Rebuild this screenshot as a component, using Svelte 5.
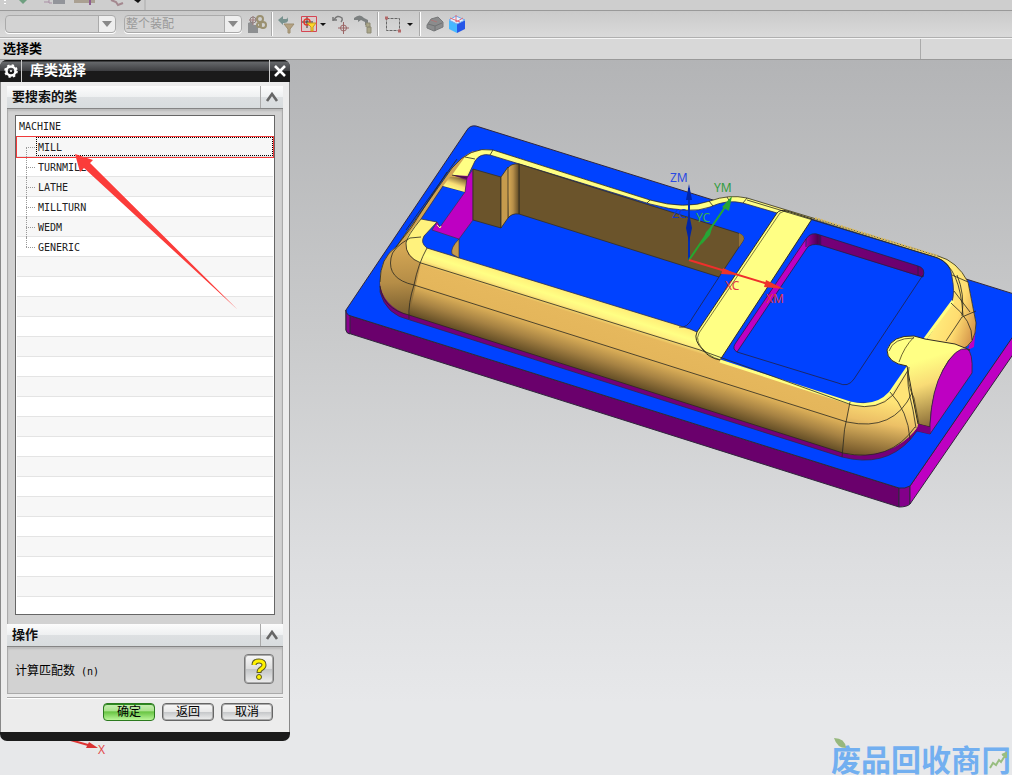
<script lang="ts">
    const classes = ["MACHINE", "MILL", "TURNMILL", "LATHE", "MILLTURN", "WEDM", "GENERIC"];
    const rows = [...classes, ...Array(18).fill("")];
    let selected = $state("MILL");
    let showClasses = $state(true);
    let showActions = $state(true);
</script>

{#snippet chevron(open: boolean)}
    <svg width="14" height="12" viewBox="0 0 14 12" fill="none" stroke="#666" stroke-width="2.6">
        <path d={open ? "M2 10L7 3L12 10" : "M2 3L7 10L12 3"} />
    </svg>
{/snippet}

<div class="app">
    <!-- lower edge of the main toolbar -->
    <div class="strip">
        <svg width="146" height="10" viewBox="0 0 146 10">
            <path d="M5 0v1M5 3v1" stroke="#fff" stroke-width="2" />
            <path d="M19 0h8l-4 4z" fill="#6f9f80" />
            <path d="M44 2h5M49 0v3h3" stroke="#a98fa5" fill="none" />
            <path d="M53 0h12v4H53z" fill="#92949a" />
            <path d="M74 0h21v3H74z" fill="#aaa092" /><path d="M90 0v5" stroke="#8f5e91" stroke-width="2" />
            <path d="M111 0l5 2 2 3 5-2" stroke="#a4888f" stroke-width="2" fill="none" />
            <path d="M134 0h7l-3 3z" fill="#111" />
            <path d="M145 0v10" stroke="#aaa" />
        </svg>
    </div>

    <div class="toolbar">
        <select class="combo first" aria-label="类型过滤器" disabled><option></option></select>
        <select class="combo second" aria-label="选择范围" disabled><option>整个装配</option></select>
        <button class="tool lead" aria-label="装配约束">
            <svg viewBox="0 0 22 22">
                <path d="M2 10l5-2v4h5v8H2z" fill="#8d8f91" /><path d="M3 7h8M7 3v9" stroke="#a07878" />
                <circle cx="7" cy="7" r="3" fill="none" stroke="#8f8080" />
                <g fill="none" stroke="#9a9070" stroke-width="2"><circle cx="14" cy="6" r="3" /><circle cx="17" cy="12" r="3" /><circle cx="13" cy="12" r="2" /></g>
            </svg>
        </button>
        <i class="sep"></i>
        <button class="tool" aria-label="重置过滤器">
            <svg viewBox="0 0 22 22">
                <path d="M2 7l5-4v3h3q2 0 2-3v5q-1 2-4 2H7v2z" fill="#78928f" />
                <path d="M8 11h10l-4 5v4h-2v-4z" fill="#b4a282" stroke="#9d8e70" />
            </svg>
        </button>
        <button class="tool" aria-label="选择优先级">
            <svg viewBox="0 0 22 22">
                <path d="M3.500 3.500h15v15h-15z" fill="#dbcccc" stroke="#d54553" />
                <path d="M4 9h11M9 4v11" stroke="#333" /><circle cx="9" cy="9" r="3" fill="none" stroke="#e13b30" stroke-width="1.500" />
                <path d="M9 10h9l-3 4v4h-2v-4z" fill="#ffd72a" stroke="#c49b20" />
            </svg>
        </button>
        <span class="caret"></span>
        <button class="tool" aria-label="旋转点">
            <svg viewBox="0 0 22 22" fill="none">
                <path d="M3 8V4M3 7h4M4 7q3-6 8-2q1 2-1 4" stroke="#777" stroke-width="1.500" />
                <path d="M8 15h11M13.500 9v12" stroke="#9b6666" /><circle cx="13.500" cy="15" r="3" stroke="#9b6666" />
            </svg>
        </button>
        <button class="tool" aria-label="移动对象">
            <svg viewBox="0 0 22 22">
                <path d="M2 5q6-5 10 0l4 2v5h-3V9L9 7 6 9V7H2z" fill="#7c8080" />
                <path d="M14 10h4v4h-4zM16 14h3v6h-4v-5z" fill="#aaa689" stroke="#8e8b76" />
            </svg>
        </button>
        <i class="sep"></i>
        <button class="tool" aria-label="矩形选择">
            <svg viewBox="0 0 22 22" fill="none">
                <path d="M4.500 5.500h13v12h-13z" stroke="#666" stroke-dasharray="3 1" />
                <path d="M3 5h3M16 18h3" stroke="#b36868" stroke-width="3" />
            </svg>
        </button>
        <span class="caret wide"></span>
        <i class="sep"></i>
        <button class="tool" aria-label="着色">
            <svg viewBox="0 0 22 22">
                <path d="M3 12l4-6 7-2 5 5v5l-9 4-7-3z" fill="#8b8c8d" stroke="#77797a" />
                <path d="M4 11l7 2 7-3M11 13v5" stroke="#717374" fill="none" /><path d="M7 7l6 2" stroke="#a77" />
            </svg>
        </button>
        <button class="tool" aria-label="定向视图">
            <svg viewBox="0 0 22 22">
                <path d="M3 7l8 4v9l-8-4z" fill="#46b8ff" /><path d="M11 11l8-4v9l-8 4z" fill="#2557e8" />
                <path d="M3 7l7-4 9 4-8 4z" fill="#e5f4ff" stroke="#6da6f0" />
                <path d="M10 2v7M10 9l7-4M4 5l10 4" stroke="#e46a75" />
            </svg>
        </button>
    </div>

    <div class="cue"><span class="prompt">选择类</span><span class="status"></span></div>

    <main class="viewport">
        <svg class="scene" viewBox="0 60 1012 715" preserveAspectRatio="xMinYMin slice">
            <defs>
                <linearGradient id="front" gradientUnits="userSpaceOnUse" x1="560" y1="289" x2="539" y2="355">
                    <stop offset="0" stop-color="#ffee78" /><stop offset=".12" stop-color="#ffff84" />
                    <stop offset=".2" stop-color="#fff080" /><stop offset=".28" stop-color="#e6b85d" />
                    <stop offset=".56" stop-color="#e4b65b" /><stop offset=".8" stop-color="#a68243" />
                    <stop offset="1" stop-color="#685128" />
                </linearGradient>
                <linearGradient id="left" gradientUnits="userSpaceOnUse" x1="397" y1="250" x2="400" y2="315">
                    <stop offset="0" stop-color="#d2a553" /><stop offset=".5" stop-color="#b58d47" /><stop offset="1" stop-color="#775d2f" />
                </linearGradient>
                <linearGradient id="bend" gradientUnits="userSpaceOnUse" x1="882" y1="400" x2="872" y2="456">
                    <stop offset="0" stop-color="#ffe477" /><stop offset=".4" stop-color="#ecc066" /><stop offset="1" stop-color="#76592b" />
                </linearGradient>
                <linearGradient id="knob" gradientUnits="userSpaceOnUse" x1="915" y1="362" x2="936" y2="428">
                    <stop offset="0" stop-color="#ffff84" /><stop offset=".35" stop-color="#f9dc76" /><stop offset="1" stop-color="#806332" />
                </linearGradient>
                <linearGradient id="corner" gradientUnits="userSpaceOnUse" x1="940" y1="310" x2="976" y2="322">
                    <stop offset="0" stop-color="#ffeb7b" /><stop offset=".5" stop-color="#ffdc70" /><stop offset="1" stop-color="#d89b4e" />
                </linearGradient>
                <linearGradient id="groove" gradientUnits="userSpaceOnUse" x1="458" y1="176" x2="453" y2="190">
                    <stop offset="0" stop-color="#71572c" /><stop offset=".6" stop-color="#f9dd75" /><stop offset="1" stop-color="#ffff84" />
                </linearGradient>
                <linearGradient id="round">
                    <stop offset="0" stop-color="#dfb058" /><stop offset=".5" stop-color="#b88f49" /><stop offset="1" stop-color="#604a25" />
                </linearGradient>
                <linearGradient id="wall">
                    <stop offset="0" stop-color="#a000a5" /><stop offset=".1" stop-color="#4c0050" /><stop offset=".14" stop-color="#760078" /><stop offset="1" stop-color="#6a006c" />
                </linearGradient>
            </defs>

            <!-- base plate -->
            <g stroke="#30283c" stroke-width="1">
                <path d="M346 310V330Q346 333 351 334L899 507V488L351 316Z" fill="#6a006c" />
                <path d="M346 310V330Q346 333 350 334V316Z" fill="#8b008f" />
                <path d="M899 488V507Q907 507 910 504V486Z" fill="#83008a" />
                <path d="M910 486V504L1014 353V334Z" fill="#be00c2" />
                <path d="M346 310L467 130Q470 125 476 126L1014 294V335L910 486Q905 489 899 488L351 316Q346 315 346 310Z" fill="#0042ff" />
            </g>

            <!-- body -->
            <path d="M380 282V292Q386 315 410 320L842 457Q884 468 910 440L917 431L930 434V425L915 420L860 449L409 309Z" fill="#74007a" stroke="#30283c" stroke-width=".7" />
            <path d="M972 335L968 350L974 347L976 325Z" fill="#be00c2" />
            <path d="M380 282Q380 258 396 247L452 168Q470 146 493 150L650 200Q685 210 710 201Q729 194 747 198L938 256Q957 261 968 282L976 323Q976 345 960 350L919 425Q900 453 863 455Q854 456 843 453L409 315Q382 306 380 282Z" fill="url(#front)" />
            <path d="M380 282Q380 258 396 247L452 168Q461 157 473 151L478 158L421 219Q405 236 406 244Q409 257 421 263L409 315Q382 306 380 282Z" fill="url(#left)" />
            <path d="M421 219L437 222L424 237Q421 244 427 248L421 263Q407 257 406 243Q406 236 421 219Z" fill="#fff27d" />
            <path d="M452 175L465 157Q474 149 493 150L650 200Q685 210 710 201Q729 194 747 198L784 210L777 213L743 203Q727 199 710 207Q690 215 650 204L490 155Q480 154 475 161L465 177Z" fill="#ffff84" />
            <path d="M747 198L938 256Q957 261 968 282L976 323Q976 345 960 350L925 338L952 300V277Q948 261 938 258L812 220Z" fill="url(#corner)" />
            <path d="M850 402Q876 407 890 392L908 365L919 425Q900 453 863 455Q854 456 843 453Z" fill="url(#bend)" />

            <!-- flat top and floor -->
            <path d="M475 161Q480 153 490 155L650 204Q690 215 710 207Q727 199 743 203L777 213L812 219L935 257Q951 262 952 277Q955 292 952 302L908 366L890 392Q879 405 863 403Q856 404 850 402L720 360L697 332L690 329L427 248Q420 243 424 236L437 222L421 219L443 186L465 192L467 178Z" fill="#0042ff" stroke="#30304a" stroke-width=".8" />
            <path d="M450 177L467 178L465 192L443 186Z" fill="url(#groove)" />
            <path d="M452 175L468 176L467 180Z" fill="#76007b" />
            <path d="M473 169V220L459 239L432 230L437 222L440 227L465 192L467 178Z" fill="#be00c2" stroke="#403047" stroke-width=".7" />
            <path d="M459 239V258L452 254Q450 248 459 239Z" fill="#c69b4d" stroke="#332e22" stroke-width=".6" />
            <path d="M437 225l3 3 1-2" fill="none" stroke="#ffff84" />
            <g stroke="#332e22" stroke-width=".8">
                <path d="M519 164L738 233Q746 236 743 241L719 277L519 214Z" fill="#6b542b" />
                <path d="M473 169L501 177V228L473 220Z" fill="#6b542b" />
                <path d="M507 169Q511 163 519 164V214Q512 213 508 218Z" fill="url(#round)" />
                <path d="M501 177L508 167V218L501 228Z" fill="#c69b4d" />
            </g>
            <path d="M739 233V247L743 241Q746 236 739 233Z" fill="#92723a" />

            <!-- crossbar -->
            <path d="M777 213Q780 209 787 211L812 219L720 360Q709 358 703 350Q693 340 697 332Z" fill="#ffff84" stroke="#333020" />
            <path d="M699 333L780 213Q784 210 788 212M699 333Q694 342 706 352Q713 359 726 361" fill="none" stroke="#48401f" stroke-width=".7" />

            <!-- right pocket -->
            <path d="M806 239Q812 231 820 235L918 266Q926 268 923 277L918 276L820 245Q811 243 807 248Z" fill="url(#wall)" />
            <path d="M806 238L807 248L737 352Q732 349 735 344Z" fill="#be00c2" />
            <path d="M737 352L838 383Q848 388 854 379L923 275M735 344L806 239Q811 231 820 235L918 266Q926 268 923 277L820 245Q811 243 807 248L737 352Q732 349 735 344M918 266V276M820 235V245M806 239V247" fill="none" stroke="#222244" stroke-width=".8" />
            <path d="M719 277L693 317Q687 329 679 327" fill="none" stroke="#222244" stroke-width=".8" />

            <!-- rims and face edges -->
            <path d="M720 361L850 403Q876 409 890 393L908 367M925 339L953 301" fill="none" stroke="#ffff84" stroke-width="3" />
            <g fill="none" stroke="#292821" stroke-width=".8">
                <path d="M380 282Q380 258 396 247L452 168Q470 146 493 150L650 200Q685 210 710 201Q729 194 747 198L938 256Q957 261 968 282L976 323Q976 345 960 350" />
                <path d="M380 286Q383 309 409 315L843 453Q890 463 915 427" />
                <path d="M421 263L700 350L852 405Q878 411 893 395L910 367" />
                <path d="M421 263Q405 257 406 243Q407 236 421 219M414 285L847 422Q894 432 912 393M414 285Q387 279 391 258Q392 248 410 238L421 237M427 248Q418 264 414 285Q408 303 409 319" />
                <path d="M447 172L411 228L396 247M457 159L406 230M465 157L475 159M493 150L490 155M452 175L467 178" />
                <path d="M850 402Q843 430 842 457M890 392Q908 411 910 439M912 393L920 430M908 367Q906 384 913 410L916 428" />
                <path d="M747 200L938 258Q960 268 963 315M952 275L968 282M954 291L970 312M951 303Q973 321 972 340M976 311L962 317L946 341M957 275Q965 294 962 316" />
                <path d="M650 200L647 203M709 201L713 206M747 198L743 203M727 197L730 202" />
            </g>
            <path d="M815 218L938 256" stroke="#dcbc60" stroke-width="2" stroke-dasharray="2 1" />

            <!-- side boss -->
            <path d="M887 350Q892 335 914 336L925 339L955 344L970 350Q954 347 943 370Q931 396 930 427L918 424L912 393L907 366Q887 363 887 350Z" fill="url(#knob)" stroke="#332e22" />
            <path d="M930 434V424Q932 389 943 370Q956 346 967 349Q973 352 972 373Z" fill="#be00c2" stroke="#30283c" stroke-width=".8" />
            <path d="M918 424L930 427V434L917 431Z" fill="#7b007f" />
            <path d="M914 337Q904 347 899 362M889 351Q893 338 914 338M909 367Q906 383 914 398L919 424" fill="none" stroke="#49401f" stroke-width=".8" />

            <!-- coordinate systems -->
            <g stroke-width="2" fill="none">
                <path d="M689 260V188" stroke="#002eb5" /><path d="M689 260L730 200" stroke="#25a82f" /><path d="M689 260L778 287" stroke="#ef2f2b" />
            </g>
            <path d="M689 184l3 16h-6zM689 213l3 15-3 14-3-14z" fill="#0025a8" />
            <path d="M732 196l-3 15-7-4zM713 225l-3 10-9 10 5-13z" fill="#27a536" />
            <path d="M784 289l-20-2 2-7zM739 275l-18-1 2-6z" fill="#ee332d" />
            <g class="axis-label">
                <text x="670" y="182" fill="#2a4ae2">ZM</text><text x="672" y="218" fill="#1537c7">ZC</text>
                <text x="714" y="192" fill="#319c3d">YM</text><text x="696" y="222" fill="#38af4c">YC</text>
                <text x="725" y="290" fill="#e33645">XC</text><text x="766" y="303" fill="#e33645">XM</text>
                <text x="98" y="754" fill="#e14848">X</text>
            </g>
            <path d="M60 737L88 745" stroke="#d33" stroke-width="2" /><path d="M98 748l-12 0 3-6z" fill="#d93232" />

            <!-- site mark -->
            <text class="mark" x="831" y="771">废品回收商冂</text>
            <path d="M834 738Q845 738 846 748Q837 748 834 738Z" fill="#97b87d" />
            <path d="M990 768l3-5 3 2 3-5 2 2 5-8M1002 755l4-2v5" fill="none" stroke="#98bd80" stroke-width="2" />
        </svg>

        <section class="dialog" aria-label="库类选择">
            <header class="title">
                <button class="gear" aria-label="选项">
                    <svg width="16" height="16" viewBox="0 0 16 16" fill="none" stroke="#fff">
                        <circle cx="8" cy="8" r="4.500" stroke-width="2.500" /><circle cx="8" cy="8" r="6" stroke-width="1.600" stroke-dasharray="2.400 2.312" />
                        <circle cx="8" cy="8" r=".6" fill="#fff" />
                    </svg>
                </button>
                <h1>库类选择</h1>
                <button class="close" aria-label="关闭">
                    <svg width="12" height="12" viewBox="0 0 12 12"><path d="M1 1l10 10M11 1l-10 10" stroke="#fff" stroke-width="2.600" /></svg>
                </button>
            </header>

            <div class="body">
                <div class="group-head">
                    <h2>要搜索的类</h2>
                    <button aria-label="折叠要搜索的类" onclick={() => (showClasses = !showClasses)}>{@render chevron(showClasses)}</button>
                </div>
                {#if showClasses}
                    <div class="group classes">
                        <ul class="tree">
                            {#each rows as name, i}
                                <li class:child={i > 0 && name} class:last={name === "GENERIC"} class:selected={name && name === selected}>
                                    {#if name}
                                        <button onclick={() => (selected = name)}>{name}</button>
                                    {/if}
                                </li>
                            {/each}
                        </ul>
                        <svg class="pointer" width="164" height="157" viewBox="0 0 164 157">
                            <path d="M0 0L18 6L15 9L163 156L9 14L5 18Z" fill="#fb3c3a" />
                        </svg>
                    </div>
                {/if}

                <div class="group-head">
                    <h2>操作</h2>
                    <button aria-label="折叠操作" onclick={() => (showActions = !showActions)}>{@render chevron(showActions)}</button>
                </div>
                {#if showActions}
                    <div class="group actions">
                        <label for="count">计算匹配数<span class="key">(n)</span></label>
                        <button id="count" class="count">
                            <svg width="18" height="22" viewBox="0 0 18 22" fill="none" stroke-linejoin="round">
                                <path d="M4 7Q4 3 9 3Q14 3 14 7Q14 9 11 11Q9 12 9 15" stroke="#5c5a22" stroke-width="5" />
                                <circle cx="9" cy="19" r="2.500" fill="#fff200" stroke="#5c5a22" />
                                <path d="M4 7Q4 3 9 3Q14 3 14 7Q14 9 11 11Q9 12 9 14" stroke="#fff200" stroke-width="3" />
                            </svg>
                        </button>
                    </div>
                {/if}

                <footer>
                    <button class="push ok">确定</button>
                    <button class="push">返回</button>
                    <button class="push">取消</button>
                </footer>
            </div>
        </section>
    </main>
</div>

<style>
    :global(body) { margin: 0; }
    .app {
        min-height: 100vh;
        display: flex;
        flex-direction: column;
        font-family: "Liberation Sans", "Noto Sans CJK SC", sans-serif;
        font-size: 12px;
        color: #000;
        background: #d8d8d8;
        overflow: hidden;
    }
    button {
        font: inherit;
        color: inherit;
        padding: 0;
        border: 0;
        background: none;
        cursor: pointer;
    }
    svg { display: block; }
    h1, h2 { margin: 0; font-size: 13px; font-weight: 700; }

    /* bars */
    .strip {
        height: 10px;
        background: #cecece;
        border-bottom: 1px solid #999;
    }
    .toolbar {
        display: flex;
        align-items: center;
        height: 26px;
        padding-left: 5px;
        background: linear-gradient(#cacaca, #dadada);
        border-bottom: 1px solid #b0b0b0;
    }
    .combo {
        appearance: none;
        box-sizing: border-box;
        height: 18px;
        padding: 0 20px 0 1px;
        border: 1px solid #aaa;
        border-radius: 4px;
        font: inherit;
        line-height: 16px;
        color: #999;
        opacity: 1;
        background:
            url("data:image/svg+xml,%3Csvg xmlns='http://www.w3.org/2000/svg' width='17' height='16'%3E%3Cpath d='M0 0h17v16H0z' fill='%23eee'/%3E%3Cpath d='M.5 0v16' stroke='%23aaa'/%3E%3Cpath d='M4 5h10l-5 6z' fill='%23888'/%3E%3C/svg%3E") right center no-repeat,
            #d3d3d3;
        box-shadow: 0 1px 0 #fff;
    }
    .first { width: 111px; }
    .second { width: 118px; margin-left: 8px; }
    .tool { width: 22px; height: 22px; flex: none; }
    .lead { margin-left: 4px; }
    .sep {
        width: 2px;
        height: 24px;
        margin: 0 3px;
        background: linear-gradient(90deg, #aaa 50%, #fff 50%);
    }
    .caret {
        margin-right: 4px;
        border: 3px solid transparent;
        border-top-color: #111;
        border-bottom: 0;
    }
    .caret.wide { margin: 0 3px; }
    .cue {
        display: flex;
        height: 20px;
        border-top: 1px solid #f5f5f5;
        border-bottom: 1px solid #999;
    }
    .prompt {
        flex: 1;
        padding-left: 3px;
        font-size: 13px;
        font-weight: 700;
        line-height: 20px;
    }
    .status { width: 9%; border-left: 1px solid #aaa; }

    /* graphics window */
    .viewport {
        flex: 1;
        position: relative;
        background: linear-gradient(#b3b4b6, #c9cacb 38%, #dddee0 70%, #e7e8ea 90%);
    }
    .scene {
        position: absolute;
        inset: 0;
        width: 100%;
        height: 100%;
    }
    .axis-label { font: 12px "Noto Sans", sans-serif; }
    .mark {
        font: 700 30px "Noto Sans CJK SC", sans-serif;
        fill: #72aff0;
    }

    /* dialog */
    .dialog {
        position: relative;
        width: 290px;
        border-radius: 7px;
        background: #1b1b1b;
        padding-bottom: 9px;
        overflow: hidden;
    }
    .title {
        display: flex;
        height: 22px;
        color: #fff;
        background: linear-gradient(#111 1px, #66686b 2px, #3d3e41 50%, #1a1a1a 51%);
    }
    .title h1 {
        flex: 1;
        padding-left: 8px;
        font-size: 14px;
        line-height: 20px;
    }
    .gear, .close { display: grid; place-items: center; width: 22px; }
    .gear { border-right: 1px solid #ccc; }
    .close { width: 21px; border-left: 1px solid #ccc; }
    .body {
        padding: 4px 6px 0;
        background: #ececec;
        border: 1px solid #888;
        border-width: 0 1px;
    }
    .group-head {
        display: flex;
        height: 22px;
        background: linear-gradient(#fcfcfc, #eef0f1 50%, #dde0e2 52%, #d8dcde);
        border-bottom: 1px solid #858585;
    }
    .group-head h2 {
        flex: 1;
        padding-left: 5px;
        line-height: 22px;
        color: #111;
    }
    .group-head button {
        display: grid;
        place-items: center;
        width: 23px;
        border-left: 1px solid #aaa;
    }
    .group {
        position: relative;
        box-sizing: border-box;
        background: #d2d2d2;
        border: 1px solid #aaa;
        border-width: 0 1px;
        box-shadow: inset 0 2px 2px #bbb;
    }
    .classes { padding: 6px 7px 9px; }
    .tree {
        height: 498px;
        margin: 0;
        padding: 0;
        list-style: none;
        overflow: hidden;
        background: #fff;
        border: 1px solid #666;
        font-family: "DejaVu Sans Mono", monospace;
        font-size: 10px;
    }
    .tree li {
        position: relative;
        box-sizing: border-box;
        height: 20px;
        margin: 0 1px;
        border-bottom: 1px solid #e4e4e4;
    }
    .tree li:first-child { height: 21px; }
    .tree li:nth-child(even) { background: #f7f7f7; }
    .tree button {
        display: block;
        box-sizing: border-box;
        width: 100%;
        height: 100%;
        padding-left: 2px;
        text-align: left;
        line-height: 22px;
        color: #222;
    }
    .tree .child button { padding-left: 21px; }
    /* branch lines */
    .child::before, .child::after {
        content: "";
        position: absolute;
        left: 9px;
        pointer-events: none;
    }
    .child::before { top: 0; height: 20px; border-left: 1px dotted #999; }
    .child::after { top: 10px; width: 9px; border-top: 1px dotted #999; }
    .child:nth-child(2)::before { top: 10px; height: 10px; }
    .last::before { height: 10px; }
    /* frame with the focus box inside it */
    .tree .selected {
        outline: 1px solid #f03a3a;
        z-index: 1;
    }
    .tree .selected button {
        width: calc(100% - 19px);
        margin-left: 19px;
        padding-left: 2px;
        outline: 1px dotted #000;
        outline-offset: -1px;
    }
    /* red arrow lies over the list */
    .pointer {
        position: absolute;
        left: 67px;
        top: 45px;
        z-index: 2;
        pointer-events: none;
    }
    .actions {
        display: flex;
        align-items: center;
        justify-content: space-between;
        height: 47px;
        padding: 0 8px 2px 7px;
        border-bottom-width: 1px;
    }
    .key {
        margin-left: 6px;
        font-family: "DejaVu Sans Mono", monospace;
        font-size: 10px;
    }
    .count {
        box-sizing: border-box;
        display: grid;
        place-items: center;
        width: 30px;
        height: 30px;
        border: 1px solid #777;
        border-radius: 4px;
        background: linear-gradient(#f8f8f8, #ddd 50%, #c3c5c7 51%, #eee);
        box-shadow: inset 0 0 0 1px #aaa;
    }
    footer {
        display: flex;
        justify-content: flex-end;
        gap: 7px;
        margin-top: 3px;
        padding: 5px 10px 11px;
        border-top: 1px solid #aaa;
        box-shadow: inset 0 1px 0 #fff;
    }
    .push {
        box-sizing: border-box;
        width: 52px;
        height: 18px;
        line-height: 16px;
        border: 1px solid #666;
        border-radius: 4px;
        background: linear-gradient(#f8f8f8, #e8e8e8 50%, #c6c8ca 52%, #f0f0f0);
        box-shadow: inset 0 0 0 1px #aaa;
    }
    .ok {
        border-color: #2c7a1f;
        background: linear-gradient(#c8efb4, #a9e28c 45%, #66c341 48%, #b9f598);
        box-shadow: inset 0 1px 0 #2c8a20;
    }
</style>
